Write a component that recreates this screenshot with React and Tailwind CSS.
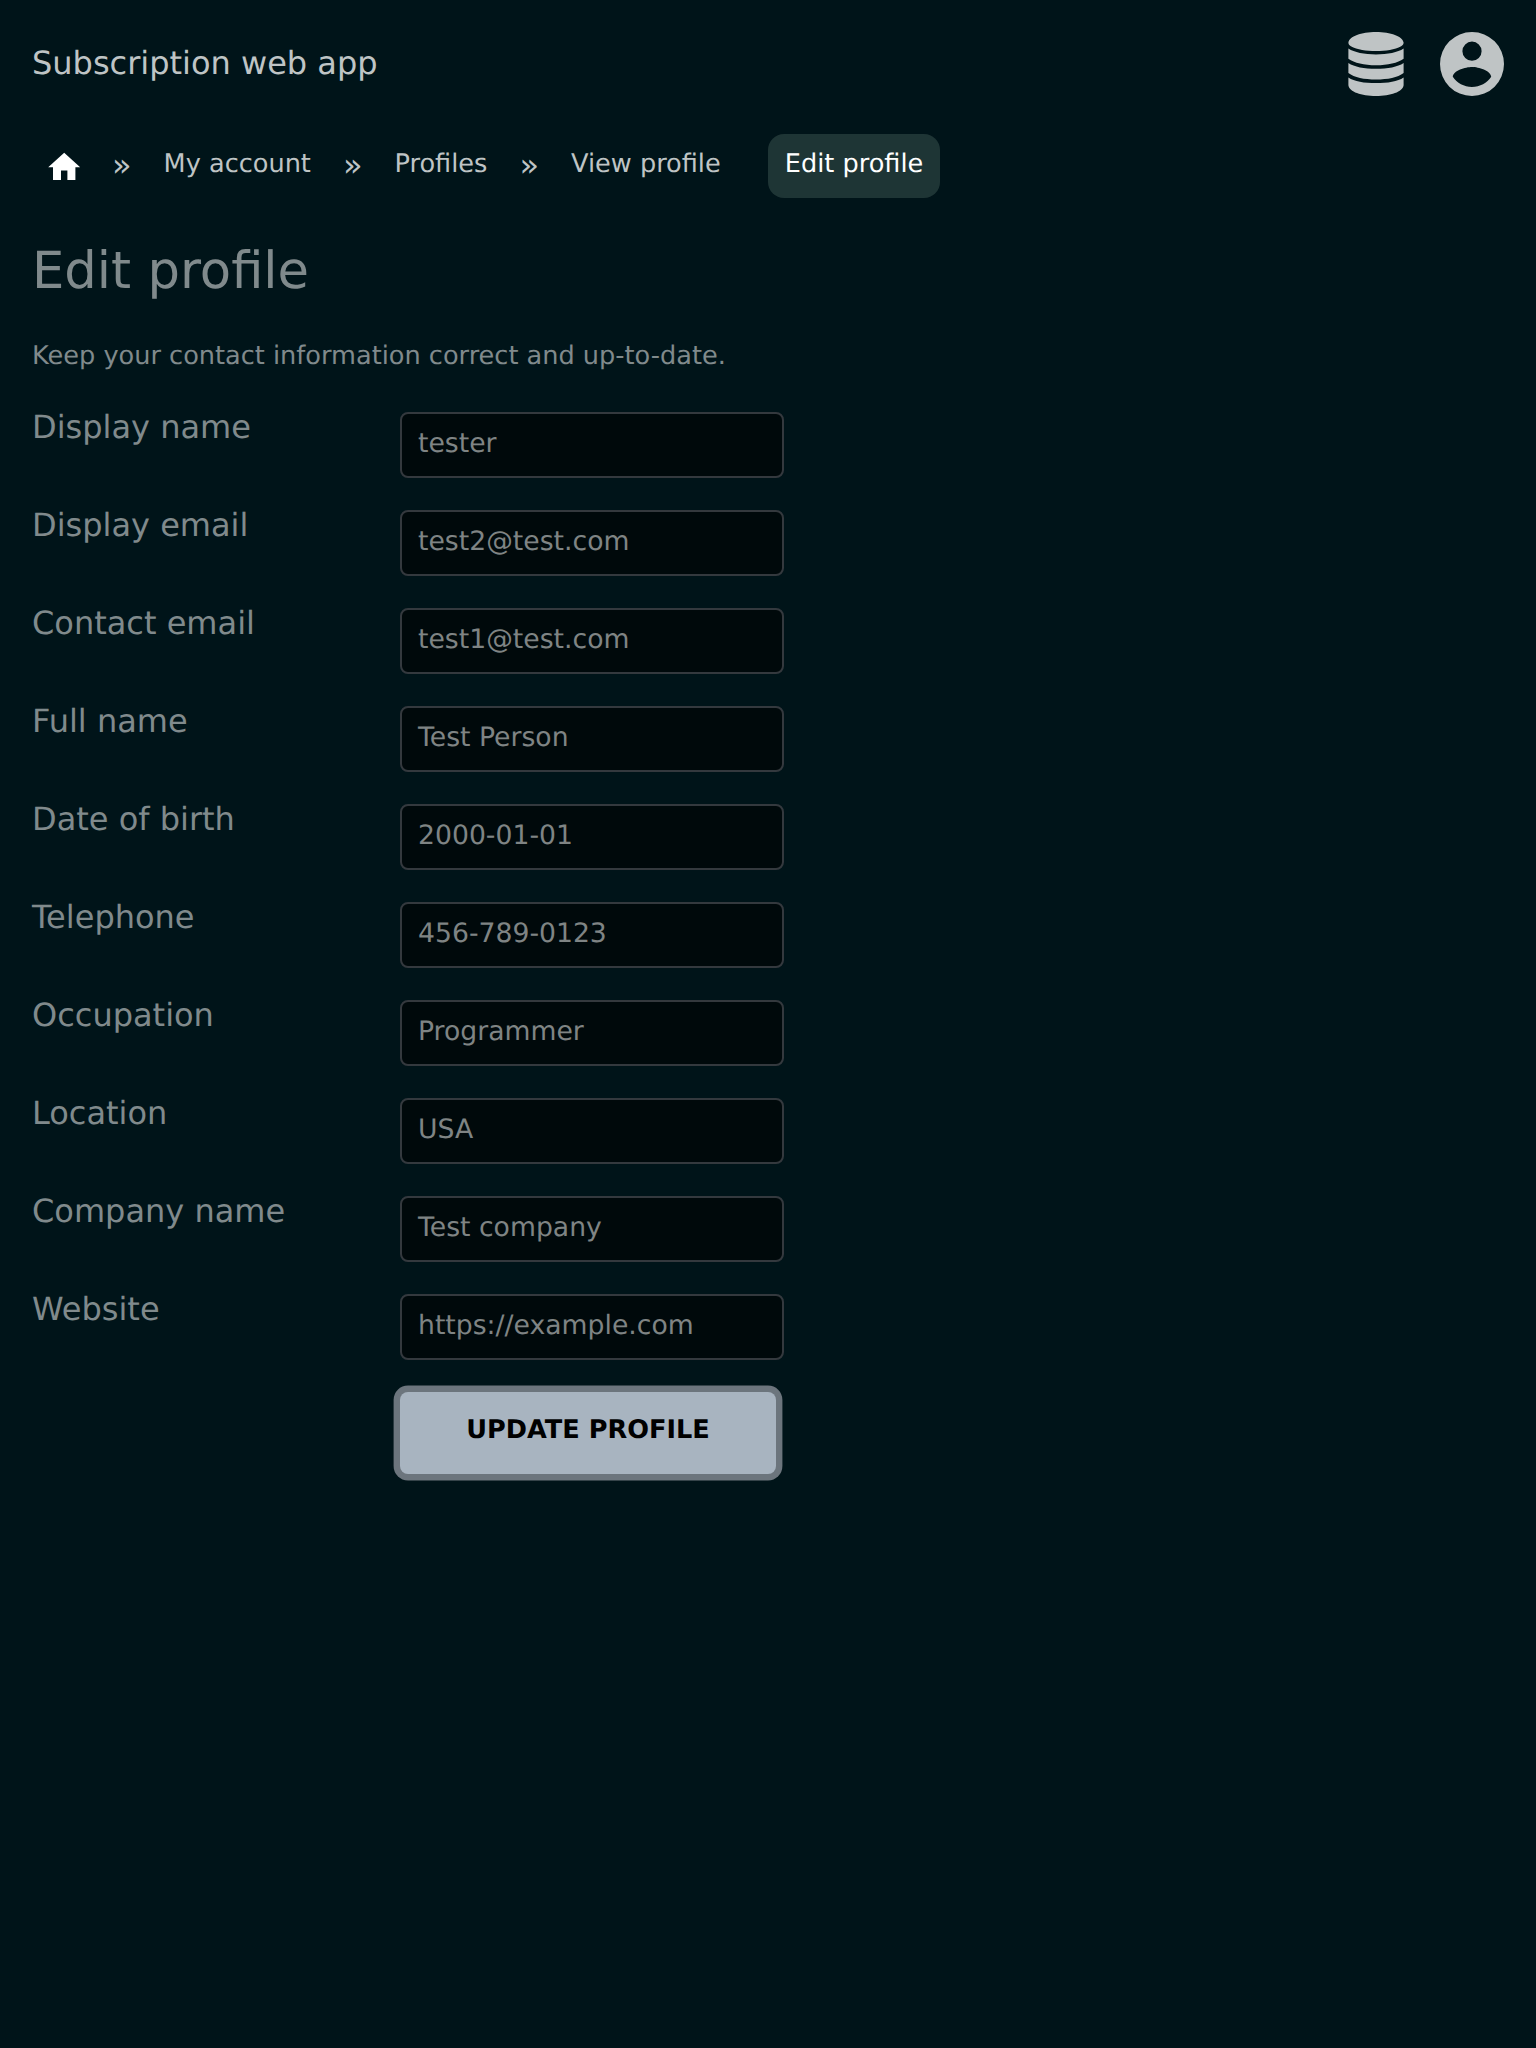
const fields = [
  ['Display name', 'tester'],
  ['Display email', 'test2@test.com'],
  ['Contact email', 'test1@test.com'],
  ['Full name', 'Test Person'],
  ['Date of birth', '2000-01-01'],
  ['Telephone', '456-789-0123'],
  ['Occupation', 'Programmer'],
  ['Location', 'USA'],
  ['Company name', 'Test company'],
  ['Website', 'https://example.com'],
];

function DatabaseIcon() {
  return (
    <svg className="h-16 w-14" viewBox="-0.4 0 56.8 64" preserveAspectRatio="none" fill="currentColor">
      <path d="M0 10.600C1 4.200 13 0 28 0S55 4.200 56 10.600C56 12.300 55 13.500 53.500 14.200C47 17.500 38 19 28 19S9 17.500 2.500 14.200C1 13.500 0 12.300 0 10.600Z" />
      <path d="M0 16.500C6 20.500 16 22.400 28 22.400S50 20.500 56 16.500V26.700C50 31 40 33.200 28 33.200S6 31 0 26.700Z" />
      <path d="M0 31C6 35 16 36.800 28 36.800S50 35 56 31V41C50 45.500 40 47.500 28 47.500S6 45.500 0 41Z" />
      <path d="M0 45.400C6 49.400 16 51 28 51S50 49.400 56 45.400V53.300C55 60 43 64 28 64S1 60 0 53.300Z" />
    </svg>
  );
}

function AccountIcon() {
  return (
    <svg className="size-16" viewBox="2 2 20 20" fill="currentColor">
      <path d="M12 19.2c-2.500 0-4.710-1.280-6-3.200.03-2 4-3.100 6-3.100s5.970 1.100 6 3.100c-1.290 1.920-3.500 3.200-6 3.200M12 5a3 3 0 0 1 3 3 3 3 0 0 1-3 3 3 3 0 0 1-3-3 3 3 0 0 1 3-3m0-3A10 10 0 0 0 2 12a10 10 0 0 0 10 10 10 10 0 0 0 10-10A10 10 0 0 0 12 2z" />
    </svg>
  );
}

function Separator() {
  return <span className="w-[19.6px] pt-px text-center text-[32px] leading-8">»</span>;
}

export default function App() {
  return (
    <div className="min-h-[2048px] bg-[#001419] px-8 font-['DejaVu_Sans',sans-serif] text-[#808a8c] [text-rendering:geometricPrecision]">
      <header className="flex h-32 items-center justify-between text-[#bfc4c5]">
        <h1 className="pb-0.5 text-[32px] leading-10">Subscription web app</h1>
        <div className="flex gap-9">
          <DatabaseIcon />
          <AccountIcon />
        </div>
      </header>
      <nav className="mt-1.5 flex h-16 items-start text-[25.6px] leading-8 text-[#bfc4c5]">
        <svg className="mt-[13.8px] ml-[12.8px] size-[38.4px] text-white" viewBox="0 0 24 24" fill="currentColor">
          <path d="M10 20v-6h4v6h5v-8h3L12 3 2 12h3v8z" />
        </svg>
        <div className="mt-3.5 ml-[28.8px] flex gap-8">
          <Separator />
          <a>My account</a>
          <Separator />
          <a>Profiles</a>
          <Separator />
          <a>View profile</a>
        </div>
        <a className="ml-[47px] h-16 rounded-2xl bg-[#1e3535] px-[17px] pt-3.5 text-white">Edit profile</a>
      </nav>
      <h2 className="mt-[41px] text-[51.2px] leading-[64px]">Edit profile</h2>
      <p className="mt-[37px] text-[25.6px] leading-8">Keep your contact information correct and up-to-date.</p>
      <form className="mt-[34px]">
        {fields.map(([label, value]) => (
          <div key={label} className="flex h-[98px] items-start">
            <label className="mt-px w-[368px] text-[32px] leading-10">{label}</label>
            <div className="mt-1.5 h-[66px] w-[384px] rounded-lg border-2 border-[#34393e] bg-[#00090b] px-4 pt-3.5 text-[26.66px] leading-8 text-[#7f8484]">
              {value}
            </div>
          </div>
        ))}
        <button
          type="button"
          className="mt-1.5 ml-[368px] flex h-[82px] w-[376px] justify-center rounded-lg bg-[#a8b4c0] pt-[22px] text-[25.6px] leading-8 font-bold text-black shadow-[0_0_0_6.4px_#6c757d] [text-rendering:geometricPrecision]"
        >
          UPDATE PROFILE
        </button>
      </form>
    </div>
  );
}
